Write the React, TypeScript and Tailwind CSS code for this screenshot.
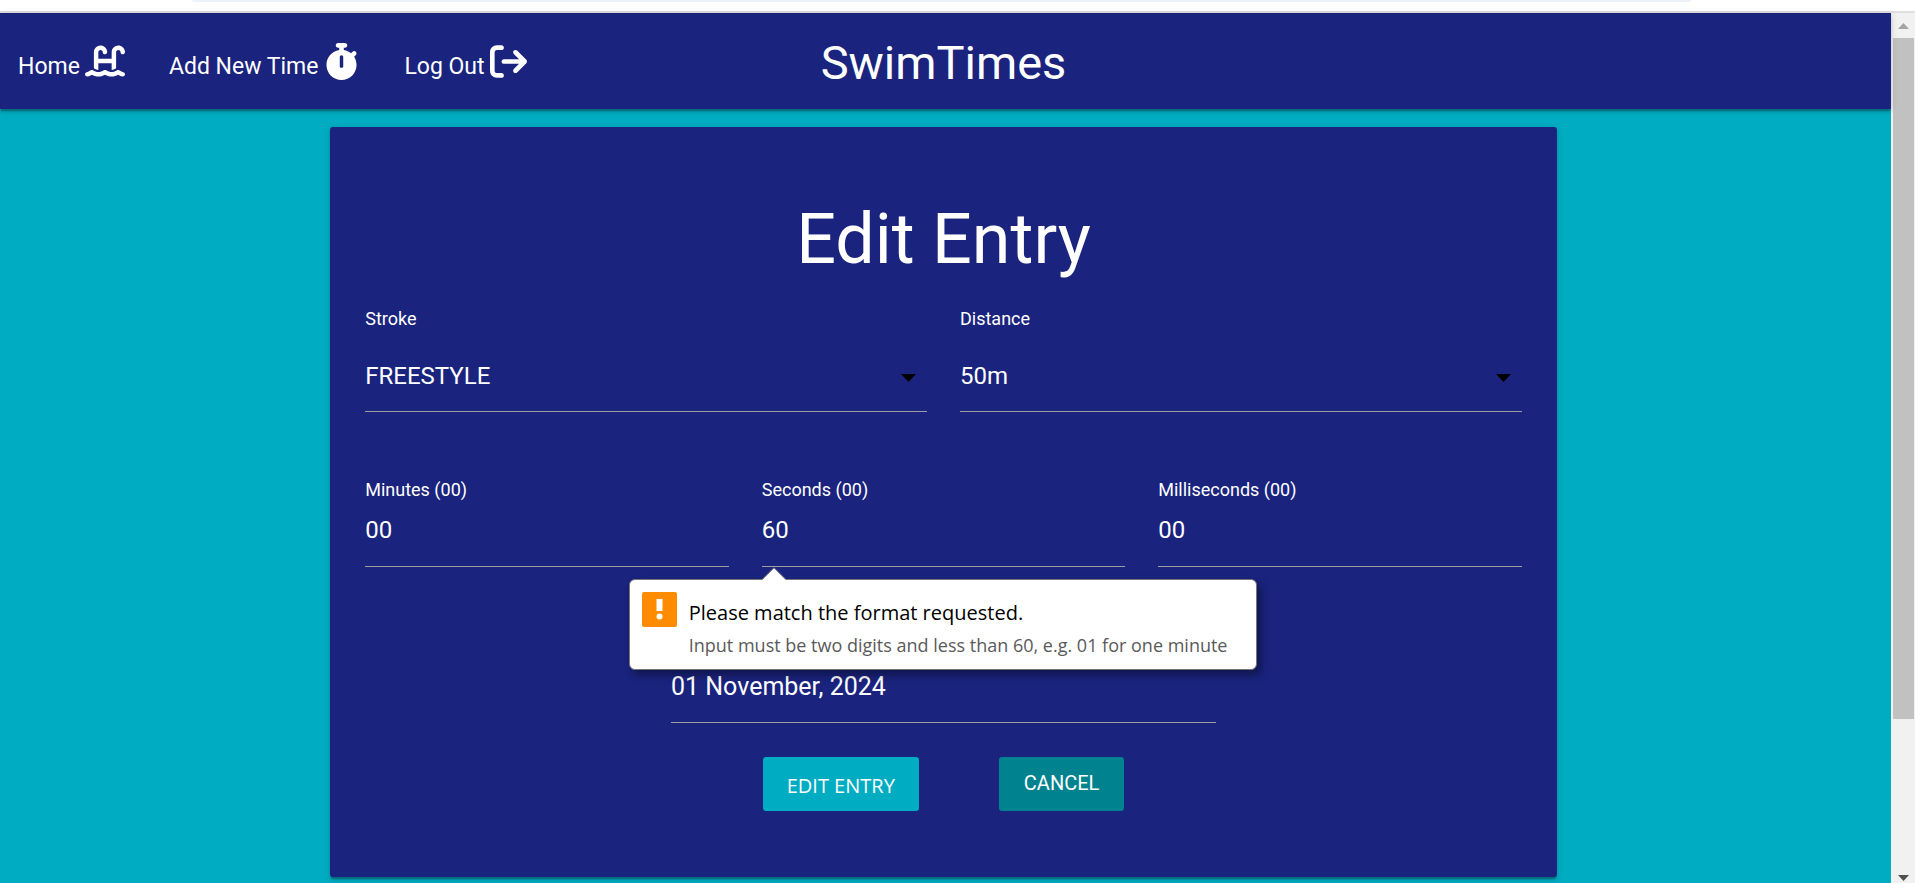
import type { ComponentType, ReactNode } from "react";
import { FaArrowRightFromBracket, FaStopwatch, FaWaterLadder } from "react-icons/fa6";

type NavItem = { label: string; icon: ComponentType<{ className?: string }>; iconClass: string };

const navItems: NavItem[] = [
  { label: "Home", icon: FaWaterLadder, iconClass: "size-auto h-10" },
  { label: "Add New Time", icon: FaStopwatch, iconClass: "size-auto h-[37px]" },
  { label: "Log Out", icon: FaArrowRightFromBracket, iconClass: "size-auto h-[37px]" },
];

const inputClass =
  "block h-[65px] w-full border-b border-[#9e9e9e] bg-transparent pb-2 leading-none text-white outline-none";

function NavBar() {
  return (
    <header className="relative z-10 grid h-24 grid-cols-[1fr_auto_1fr] items-center bg-[#1a237e] pr-1 shadow-[0_3px_3px_0_rgba(0,0,0,0.14),0_1px_7px_0_rgba(0,0,0,0.12),0_3px_1px_-1px_rgba(0,0,0,0.2)]">
      <nav className="flex items-center gap-11 pl-[18px]">
        {navItems.map(({ label, icon: Icon, iconClass }) => (
          <a key={label} href="#" className="flex items-center gap-[5px] whitespace-nowrap text-[23px]">
            <span className="pt-3">{label}</span>
            <Icon className={iconClass} />
          </a>
        ))}
      </nav>
      <a href="#" className="pt-0.5 text-[47px] leading-none">
        SwimTimes
      </a>
    </header>
  );
}

function SelectField({ id, label, options }: { id: string; label: string; options: string[] }) {
  return (
    <div>
      <label htmlFor={id} className="block text-[18px] leading-6">
        {label}
      </label>
      <div className="relative mt-4">
        <select
          id={id}
          className="block h-[65px] w-full appearance-none border-b border-[#9e9e9e] bg-transparent pb-1.5 text-[24px] text-white outline-none"
        >
          {options.map((option) => (
            <option key={option}>{option}</option>
          ))}
        </select>
        <svg
          viewBox="0 0 15 8"
          aria-hidden="true"
          className="pointer-events-none absolute top-[27px] right-[11px] h-2 w-[15px] fill-black"
        >
          <path d="M0 0h15L7.500 8z" />
        </svg>
      </div>
    </div>
  );
}

function TimeField({ id, label, value, children }: { id: string; label: string; value: string; children?: ReactNode }) {
  return (
    <div className="relative">
      <label htmlFor={id} className="block text-[18px] leading-6">
        {label}
      </label>
      <input id={id} defaultValue={value} className={`${inputClass} text-[24px]`} />
      {children}
    </div>
  );
}

function ValidationBubble() {
  return (
    <div
      role="alert"
      className="absolute top-full -left-[133px] z-20 mt-3 flex h-[91px] w-[628px] gap-3 rounded-md border border-[#767676] bg-white pt-3 pl-3 font-['Open_Sans',sans-serif] shadow-[4px_5px_8px_rgba(0,0,0,0.4)]"
    >
      <svg viewBox="0 0 24 13" aria-hidden="true" className="absolute -top-[13px] left-[132px] h-[13px] w-6">
        <path d="M0 13L12 1l12 12z" fill="#fff" />
        <path d="M0 12.500L12 .7l12 11.800" fill="none" stroke="#767676" />
      </svg>
      <svg viewBox="0 0 35 35" aria-hidden="true" className="size-[35px] shrink-0">
        <rect width="35" height="35" rx="2" fill="#ff8c00" />
        <path d="M14.500 7h6v12h-6z" fill="#fff" />
        <circle cx="17.500" cy="24.500" r="3" fill="#fff" />
      </svg>
      <div className="whitespace-nowrap pt-[5px]">
        <p className="text-[20px] leading-8 text-black">Please match the format requested.</p>
        <p className="text-[18px] leading-8 text-[#5a5a5a]">
          Input must be two digits and less than 60, e.g. 01 for one minute
        </p>
      </div>
    </div>
  );
}

function EntryForm() {
  return (
    <form
      noValidate
      className="mx-auto w-[65%] rounded-[3px] bg-[#1a237e] px-[35px] pt-[70px] pb-[66px] shadow-[0_3px_3px_0_rgba(0,0,0,0.14),0_1px_7px_0_rgba(0,0,0,0.12),0_3px_1px_-1px_rgba(0,0,0,0.2)]"
    >
      <h1 className="text-center text-[70px] leading-[84px]">Edit Entry</h1>
      <div className="mt-[26px] grid grid-cols-2 gap-[33px]">
        <SelectField id="stroke" label="Stroke" options={["FREESTYLE", "BACKSTROKE", "BREASTSTROKE", "BUTTERFLY"]} />
        <SelectField id="distance" label="Distance" options={["50m", "100m", "200m", "400m"]} />
      </div>
      <div className="mt-[66px] grid grid-cols-3 gap-[33px]">
        <TimeField id="minutes" label="Minutes (00)" value="00" />
        <TimeField id="seconds" label="Seconds (00)" value="60">
          <ValidationBubble />
        </TimeField>
        <TimeField id="milliseconds" label="Milliseconds (00)" value="00" />
      </div>
      <div className="mx-auto mt-[91px] w-[545px] max-w-full">
        <input aria-label="Date" defaultValue="01 November, 2024" className={`${inputClass} text-[25px]`} />
      </div>
      <div className="mt-[34px] flex justify-center gap-20">
        <button
          type="submit"
          className="h-[54px] rounded-[3px] bg-[#00acc1] px-6 pt-1 font-['Open_Sans',sans-serif] text-[20px]"
        >
          EDIT ENTRY
        </button>
        <button type="button" className="h-[54px] rounded-[3px] bg-[#00838f] px-[25px] pb-0.5 text-[20px]">
          CANCEL
        </button>
      </div>
    </form>
  );
}

function ScrollTrack() {
  return (
    <div aria-hidden="true" className="flex w-6 shrink-0 flex-col items-center bg-[#f1f1f1]">
      <svg viewBox="0 0 24 25" className="h-[25px] w-6 fill-[#a3a3a3]">
        <path d="M7 16l5.500-6 5.500 6z" />
      </svg>
      <div className="w-[21px] grow-[681] basis-0 bg-[#c1c1c1]" />
      <div className="grow-[139] basis-0" />
      <svg viewBox="0 0 24 25" className="h-[25px] w-6 fill-[#505050]">
        <path d="M7 17l5.500 6 5.500-6z" />
      </svg>
    </div>
  );
}

export default function App() {
  return (
    <div className="flex min-h-screen flex-col bg-white font-[Roboto,sans-serif] text-white">
      <div className="h-[13px] border-b-2 border-[#dfdfdf] pr-56 pl-48">
        <div className="h-0.5 rounded-b bg-[#edf2fa]" />
      </div>
      <div className="flex grow">
        <div className="min-w-0 grow bg-[#00acc1]">
          <NavBar />
          <main className="pt-[18px] pr-1 pb-1.5">
            <EntryForm />
          </main>
        </div>
        <ScrollTrack />
      </div>
    </div>
  );
}
